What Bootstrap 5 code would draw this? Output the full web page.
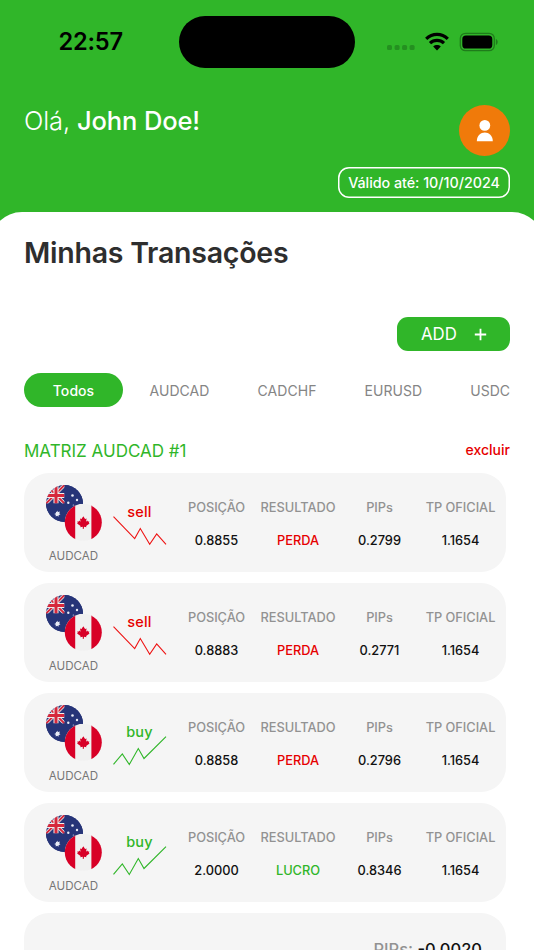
<!DOCTYPE html>
<html lang="pt-BR">
<head>
<meta charset="utf-8">
<meta name="viewport" content="width=device-width, initial-scale=1">
<title>Minhas Transações</title>
<link rel="stylesheet" href="https://cdn.jsdelivr.net/npm/bootstrap@5.3.0/dist/css/bootstrap.min.css">
<style>
:root{--brand:#30b629;--loss:#e60000}
html,body{height:950px;overflow:hidden}
body{font-family:Inter,"Liberation Sans",sans-serif;background:var(--brand);color:#111}
svg{display:block;flex:none}
.phone{width:534px;height:950px}
.statusbar{display:grid;grid-template-columns:179px 176px 179px;height:84px;padding-top:16px}
.clock{font-size:23.6px;font-weight:600;line-height:52px;letter-spacing:-.2px;color:#000;padding-left:58.5px}
.island{height:52px;border-radius:26px;background:#000}
.status-icons{height:52px;padding-left:32px}
.cell-dots{margin-top:11px}
.greet{height:128px;padding:20px 24px 0}
.hello{font-size:25.5px;line-height:34px;font-weight:300;letter-spacing:-.13px}
.hello b{font-weight:500}
.avatar{width:51px;height:51px;background:#f07a0a;margin-top:1px}
.valid{height:31px;width:172px;box-shadow:inset 0 0 0 1.5px #fff;border-radius:11px;font-size:14.3px;font-weight:500;line-height:31px;letter-spacing:-.03px;margin-top:11px}
.sheet{border-radius:32px 32px 0 0;margin:0 -10px;padding:0 34px;height:738px}
.page-title{font-size:28.5px;font-weight:600;line-height:36px;letter-spacing:-.24px;color:#2e2e2e;padding-top:23px;height:105px}
.add-btn{width:113px;height:34px;border-radius:11px;background:var(--brand);font-size:16.8px;line-height:34px;padding:0 23px 0 24px}
.pills{margin-top:22px;height:34px;font-size:14px;line-height:35px;letter-spacing:.06px;color:#858585}
.pill{padding:0 24px;flex:none}
.pill.on{width:99px;padding:0;border-radius:17px;background:var(--brand);color:#fff;font-weight:500;margin-right:2.5px}
.group-head{height:66px;padding-top:32px;line-height:24px}
.group-name{font-size:17px;color:var(--brand)}
.remove{font-size:14px;font-weight:500;color:var(--loss);margin-top:-1px}
.trade-list{gap:11px}
.trade{width:482px;height:99px;border-radius:25px;background:#f5f5f5;flex:none}
.trade-grid{display:grid;grid-template-columns:79px 63px 81px 82px 81px 81px;padding:0 5px 0 10px}
.pair{padding-top:11.5px;font-size:11.6px;color:#777}
.pair span{line-height:16px;margin-top:7px}
.trend{width:53px;padding-top:29px;font-size:14.5px;font-weight:500;line-height:20px;letter-spacing:.2px}
.trend svg{margin-top:-5.8px}
.stat{padding-top:26px;font-size:12.8px;line-height:18px;white-space:nowrap}
.stat dt{font-weight:500;color:#929292;letter-spacing:-.03px;margin-bottom:15px}
.stat dd{font-weight:500;margin:0}
.up{color:var(--brand)}
.down{color:var(--loss)}
.total{padding:25px 24px 0;font-size:16.5px;line-height:22px;font-weight:500}
.total span{color:#929292}
</style>
<script src="https://cdn.jsdelivr.net/npm/bootstrap@5.3.0/dist/js/bootstrap.bundle.min.js"></script>
</head>
<body>
<svg width="0" height="0" class="position-absolute" aria-hidden="true">
  <defs>
    <clipPath id="cAu"><circle cx="18.5" cy="18.5" r="18.5"/></clipPath>
    <clipPath id="cCa"><circle cx="37.3" cy="37.3" r="18.5"/></clipPath>
  </defs>
  <symbol id="flags" viewBox="0 0 56 56">
    <g clip-path="url(#cAu)">
      <rect width="37" height="37" fill="#263478"/>
      <path d="M0 0L18.5 18.5M18.5 0L0 18.5" stroke="#eee" stroke-width="3.4"/>
      <path d="M0 0L18.5 18.5M18.5 0L0 18.5" stroke="#d6283c" stroke-width="1.8"/>
      <path d="M10 0V18.5M0 10.5H18.5" stroke="#eee" stroke-width="5"/>
      <path d="M10 0V18.5M0 10.5H18.5" stroke="#d6283c" stroke-width="3"/>
      <path d="M18.5 0H37V37H0V18.5H18.5Z" fill="#263478"/>
      <g fill="#e9ebf4"><path d="M11.3 25.4l.9 1.5 1.7-.3-.6 1.6 1.1 1.3-1.7.4-.2 1.8-1.3-1-1.5.8.1-1.7-1.6-.9 1.7-.6.1-1.7 1.2.7z"/><circle cx="26.5" cy="10.5" r="1.3"/><circle cx="31" cy="15" r="1.2"/><circle cx="22.3" cy="17.7" r="1.2"/><circle cx="27.3" cy="20" r=".6"/></g>
    </g>
    <g clip-path="url(#cCa)">
      <rect x="18.8" y="18.8" width="37" height="37" fill="#f0f0f0"/>
      <rect x="18" y="18" width="11.2" height="38" fill="#d80027"/>
      <rect x="45.4" y="18" width="11" height="38" fill="#d80027"/>
      <path d="M37.3 31.2l1.8 2.9 1.5-.7-.5 3.4 1.3-1.2.5 1 1.5-.2-.6 1.6.8.6-3.5 2.5.3 1.1-2.5-.4.1 2h-1.3l.1-2-2.6.4.4-1.1-3.6-2.5.8-.6-.6-1.6 1.6.2.5-1 1.3 1.2-.6-3.4 1.5.7z" fill="#d80027"/>
    </g>
  </symbol>
  <symbol id="line-down" viewBox="0 0 54 30"><path d="M.5.7L21.7 22.6 27.3 12.5 36.7 28.3 43.7 18 53 28.3" fill="none" stroke="#e11" stroke-width="1.1"/></symbol>
  <symbol id="line-up" viewBox="0 0 54 30"><path d="M.5 28.3L9.3 18 16.3 28.5 25.3 12.5 31 22.5 53 .7" fill="none" stroke="#30b629" stroke-width="1.1"/></symbol>
</svg>

<div class="phone overflow-hidden">
  <div class="statusbar">
    <div class="clock">22:57</div>
    <div class="island"></div>
    <div class="status-icons d-flex align-items-center">
      <svg width="28" height="5" viewBox="0 0 28 5" class="cell-dots" fill="#249020"><rect width="5" height="5" rx="1.6"/><rect x="7.6" width="5" height="5" rx="1.6"/><rect x="15.1" width="5" height="5" rx="1.6"/><rect x="22.6" width="5" height="5" rx="1.6"/></svg>
      <svg width="24" height="18" viewBox="0 0 24 18" class="ms-2 overflow-visible"><g transform="translate(2 -.4)" fill="none" stroke="#000" stroke-width="3.2"><path d="M1.2 6.3C7.4 .3 16.6 .3 22.8 6.3"/><path d="M5 10.6C9 6.8 15 6.8 19 10.6"/><path d="M12 17.8l-3.8-3.9c2.2-1.9 5.4-1.9 7.6 0z" fill="#000" stroke="none"/></g></svg>
      <svg width="39" height="19" viewBox="0 0 39 19" class="ms-2 overflow-visible"><g transform="translate(4.5 -.5)"><rect x=".8" y=".8" width="34" height="17.4" rx="5.2" fill="none" stroke="#1f7c1b" stroke-width="1.3"/><rect x="2.8" y="3" width="30" height="13" rx="3.6"/><path d="M36.4 6.5c2.4.9 2.4 5 0 5.9z" fill="#1f7c1b"/></g></svg>
    </div>
  </div>

  <header class="greet d-flex justify-content-between text-white">
    <div class="hello">Olá, <b>John Doe!</b></div>
    <div class="d-flex flex-column align-items-end">
      <div class="avatar rounded-circle d-flex align-items-center justify-content-center">
        <svg width="17" height="22" viewBox="0 0 17 22" fill="#fff"><circle cx="8.8" cy="5.4" r="5.4"/><path d="M.8 21.3C.8 9.4 16.8 9.4 16.8 21.3z"/></svg>
      </div>
      <div class="valid text-center text-nowrap">Válido até: 10/10/2024</div>
    </div>
  </header>

  <main class="sheet bg-white">
    <h1 class="page-title m-0">Minhas Transações</h1>
    <div class="d-flex justify-content-end">
      <button type="button" class="add-btn border-0 text-white d-flex justify-content-between align-items-center">ADD
        <svg width="13" height="13" viewBox="0 0 13 13"><path d="M6.5 .8V12.2M.8 6.5H12.2" stroke="#fff" stroke-width="1.8"/></svg>
      </button>
    </div>
    <nav class="pills d-flex text-nowrap">
      <div class="pill on text-center">Todos</div>
      <div class="pill">AUDCAD</div>
      <div class="pill">CADCHF</div>
      <div class="pill">EURUSD</div>
      <div class="pill pe-0">USDC</div>
    </nav>
    <div class="group-head d-flex justify-content-between">
      <div class="group-name">MATRIZ AUDCAD #1</div>
      <div class="remove">excluir</div>
    </div>

    <section class="trade-list d-flex flex-column">
      <article class="trade trade-grid text-center">
        <div class="pair d-flex flex-column align-items-center"><svg width="56" height="56"><use href="#flags"/></svg><span>AUDCAD</span></div>
        <div class="trend down">sell<svg width="54" height="30"><use href="#line-down"/></svg></div>
        <dl class="stat m-0"><dt>POSIÇÃO</dt><dd>0.8855</dd></dl>
        <dl class="stat m-0"><dt>RESULTADO</dt><dd class="down">PERDA</dd></dl>
        <dl class="stat m-0"><dt>PIPs</dt><dd>0.2799</dd></dl>
        <dl class="stat m-0"><dt>TP OFICIAL</dt><dd>1.1654</dd></dl>
      </article>
      <article class="trade trade-grid text-center">
        <div class="pair d-flex flex-column align-items-center"><svg width="56" height="56"><use href="#flags"/></svg><span>AUDCAD</span></div>
        <div class="trend down">sell<svg width="54" height="30"><use href="#line-down"/></svg></div>
        <dl class="stat m-0"><dt>POSIÇÃO</dt><dd>0.8883</dd></dl>
        <dl class="stat m-0"><dt>RESULTADO</dt><dd class="down">PERDA</dd></dl>
        <dl class="stat m-0"><dt>PIPs</dt><dd>0.2771</dd></dl>
        <dl class="stat m-0"><dt>TP OFICIAL</dt><dd>1.1654</dd></dl>
      </article>
      <article class="trade trade-grid text-center">
        <div class="pair d-flex flex-column align-items-center"><svg width="56" height="56"><use href="#flags"/></svg><span>AUDCAD</span></div>
        <div class="trend up">buy<svg width="54" height="30"><use href="#line-up"/></svg></div>
        <dl class="stat m-0"><dt>POSIÇÃO</dt><dd>0.8858</dd></dl>
        <dl class="stat m-0"><dt>RESULTADO</dt><dd class="down">PERDA</dd></dl>
        <dl class="stat m-0"><dt>PIPs</dt><dd>0.2796</dd></dl>
        <dl class="stat m-0"><dt>TP OFICIAL</dt><dd>1.1654</dd></dl>
      </article>
      <article class="trade trade-grid text-center">
        <div class="pair d-flex flex-column align-items-center"><svg width="56" height="56"><use href="#flags"/></svg><span>AUDCAD</span></div>
        <div class="trend up">buy<svg width="54" height="30"><use href="#line-up"/></svg></div>
        <dl class="stat m-0"><dt>POSIÇÃO</dt><dd>2.0000</dd></dl>
        <dl class="stat m-0"><dt>RESULTADO</dt><dd class="up">LUCRO</dd></dl>
        <dl class="stat m-0"><dt>PIPs</dt><dd>0.8346</dd></dl>
        <dl class="stat m-0"><dt>TP OFICIAL</dt><dd>1.1654</dd></dl>
      </article>
      <article class="trade total text-end"><span>PIPs:</span> -0.0020</article>
    </section>
  </main>
</div>
</body>
</html>
